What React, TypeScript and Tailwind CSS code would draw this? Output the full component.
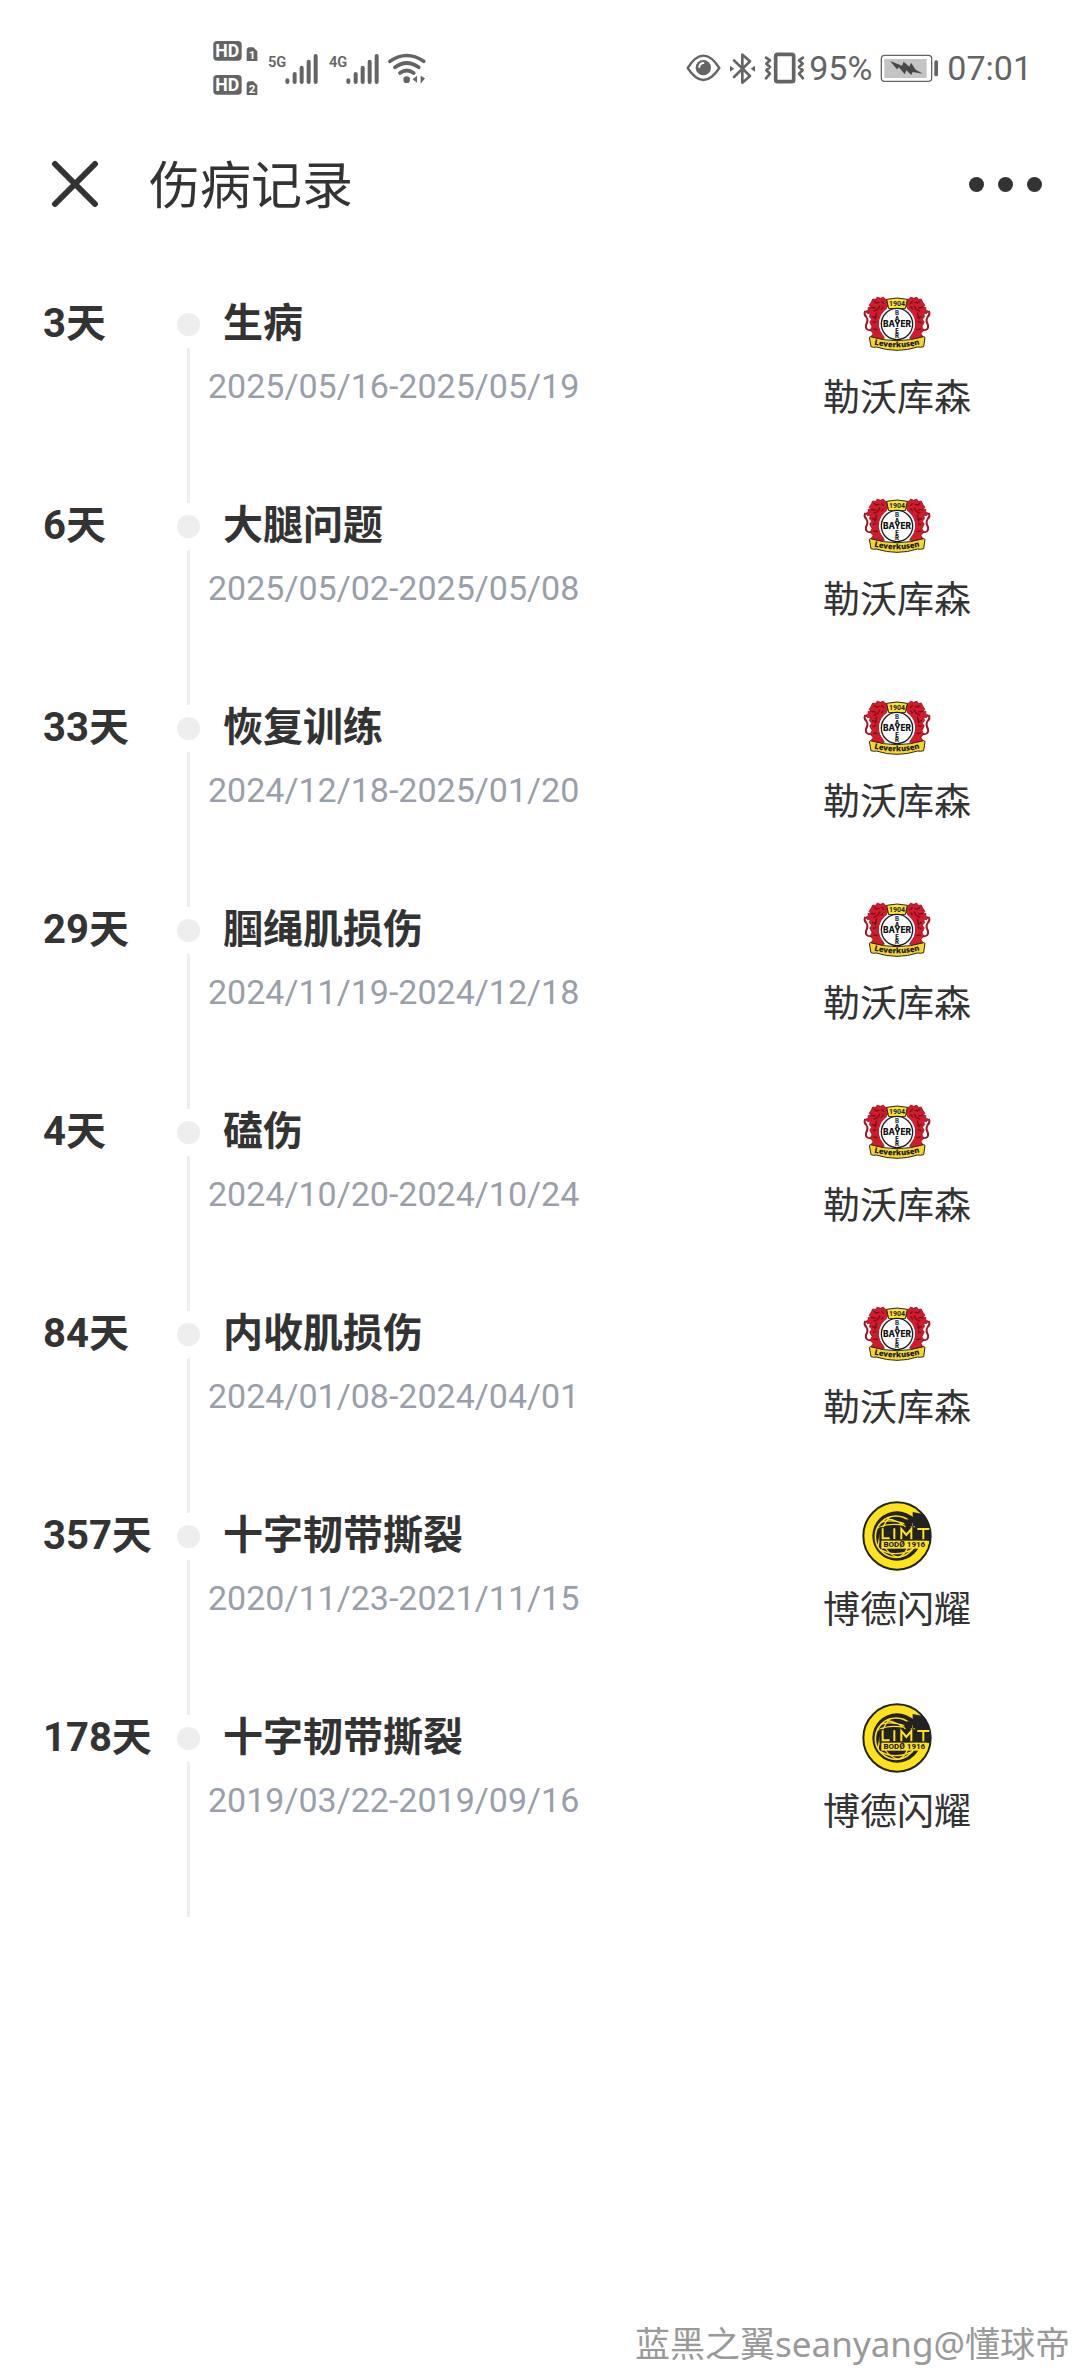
import React from "react";

type Club = "leverkusen" | "bodo";

interface Injury {
  days: number;
  title: string;
  period: string;
  club: Club;
}

const clubNames: Record<Club, string> = {
  leverkusen: "勒沃库森",
  bodo: "博德闪耀",
};

const injuries: Injury[] = [
  { days: 3, title: "生病", period: "2025/05/16-2025/05/19", club: "leverkusen" },
  { days: 6, title: "大腿问题", period: "2025/05/02-2025/05/08", club: "leverkusen" },
  { days: 33, title: "恢复训练", period: "2024/12/18-2025/01/20", club: "leverkusen" },
  { days: 29, title: "腘绳肌损伤", period: "2024/11/19-2024/12/18", club: "leverkusen" },
  { days: 4, title: "磕伤", period: "2024/10/20-2024/10/24", club: "leverkusen" },
  { days: 84, title: "内收肌损伤", period: "2024/01/08-2024/04/01", club: "leverkusen" },
  { days: 357, title: "十字韧带撕裂", period: "2020/11/23-2021/11/15", club: "bodo" },
  { days: 178, title: "十字韧带撕裂", period: "2019/03/22-2019/09/16", club: "bodo" },
];

const GREY = "#646464";

function HdBadges() {
  return (
    <svg viewBox="40 33 135 168" className="h-14 w-[45px]" aria-hidden="true">
      {[0, 102].map((dy, i) => (
        <g key={dy} transform={`translate(0 ${dy})`}>
          <rect x="41" y="36" width="85" height="59" rx="11" fill={GREY} />
          <text x="83" y="84" textAnchor="middle" fontFamily="Roboto" fontWeight="700" fontSize="53" fill="#fff">
            HD
          </text>
          <path d="M141 66q0-11 8-11h12l12 12v29h-32z" fill={GREY} />
          <text x="157" y="91" textAnchor="middle" fontFamily="Roboto" fontWeight="700" fontSize="35" fill="#fff">
            {i + 1}
          </text>
        </g>
      ))}
    </svg>
  );
}

function Signal({ label }: { label: string }) {
  return (
    <svg viewBox="205 63 153 99" className="h-[33px] w-[51px]" aria-hidden="true">
      <text x="205" y="108" fontFamily="Roboto" fontWeight="600" fontSize="44" fill={GREY}>
        {label}
      </text>
      <g stroke={GREY} strokeWidth="12" strokeLinecap="round">
        <path d="M263 148v5M285 129v24M306 110v43M327 92v61M348 75v78" />
      </g>
    </svg>
  );
}

function Wifi() {
  return (
    <svg viewBox="564 66 114 96" className="h-8 w-[38px]" fill="none" stroke={GREY} strokeWidth="11" strokeLinecap="round" aria-hidden="true">
      <path d="M570 94q50-35 101 0M585 112q35-26 71 0M600 129q20-15 41 0" />
      <circle cx="620" cy="149" r="10" fill={GREY} stroke="none" />
      <path d="M651 137v21l-13-10zM662 137v24l13-16z" fill={GREY} stroke="none" />
    </svg>
  );
}

function Eye() {
  return (
    <svg viewBox="48 72 105 84" className="h-7 w-[35px]" fill="none" aria-hidden="true">
      <path d="M53 114q47-74 95 0q-48 72-95 0z" stroke={GREY} strokeWidth="7" strokeLinejoin="round" />
      <circle cx="100" cy="113" r="23" fill={GREY} />
      <path d="M88 111q1-11 12-12" stroke="#fff" strokeWidth="6" strokeLinecap="round" />
    </svg>
  );
}

function Bluetooth() {
  return (
    <svg viewBox="177 64 81 99" className="h-[33px] w-[27px]" fill="none" aria-hidden="true">
      <path d="M192 89l48 47-23 20V72l23 20-48 47" stroke={GREY} strokeWidth="8" strokeLinejoin="round" strokeLinecap="round" />
      <path d="M180 105l13 9-13 9zM255 105l-13 9 13 9z" fill={GREY} />
    </svg>
  );
}

function Vibrate() {
  return (
    <svg viewBox="282 66 123 96" className="h-8 w-[41px]" fill="none" stroke={GREY} aria-hidden="true">
      <rect x="317" y="73" width="54" height="82" rx="6" strokeWidth="11" />
      <path d="M288 83l12 8-11 10 11 10-11 10 11 10-12 14M399 83l-12 8 11 10-11 10 11 10-11 10 12 14" strokeWidth="8" strokeLinejoin="round" strokeLinecap="round" />
    </svg>
  );
}

function Battery() {
  return (
    <svg viewBox="634 72 177 87" className="h-[29px] w-[59px]" fill="none" aria-hidden="true">
      <rect x="638" y="76" width="151" height="78" rx="10" stroke={GREY} strokeWidth="4" />
      <rect x="647" y="87" width="127" height="57" fill="#c4c4c4" />
      <path d="M664 93l36 14 5-12 17 15 5-12 14 21 22 12-31-5-4 9-15-14-5 12-17-21-6 6z" fill="#484848" />
      <rect x="797" y="91" width="11" height="48" rx="5" fill={GREY} />
    </svg>
  );
}

function StatusBar() {
  return (
    <div className="flex h-[136px] items-center justify-between pr-12 pl-[213px] text-[#646464]">
      <div className="flex items-center">
        <HdBadges />
        <div className="ml-2.5 flex items-center gap-2.5">
          <Signal label="5G" />
          <Signal label="4G" />
        </div>
        <div className="ml-2">
          <Wifi />
        </div>
      </div>
      <div className="flex items-center text-[34px] leading-10">
        <div className="flex items-center gap-2">
          <Eye />
          <Bluetooth />
          <Vibrate />
        </div>
        <span className="ml-1">95%</span>
        <span className="mr-2 ml-2">
          <Battery />
        </span>
        <time>07:01</time>
      </div>
    </div>
  );
}

function Header() {
  return (
    <header className="flex h-24 items-center pr-[38px] pl-[51px] text-[#333]">
      <button type="button" aria-label="关闭" className="cursor-pointer">
        <svg viewBox="0 0 48 48" className="size-12" stroke="currentColor" strokeWidth="6" strokeLinecap="round" aria-hidden="true">
          <path d="M4 4l40 40M44 4L4 44" />
        </svg>
      </button>
      <h1 className="ml-[50px] pt-1.5 text-[51px] leading-[60px]">伤病记录</h1>
      <button type="button" aria-label="更多" className="ml-auto flex cursor-pointer gap-3.5">
        <span className="size-[15px] rounded-full bg-[#333]" />
        <span className="size-[15px] rounded-full bg-[#333]" />
        <span className="size-[15px] rounded-full bg-[#333]" />
      </button>
    </header>
  );
}

/* One rampant lion; mirrored for the right-hand side of the crest. */
function Lion() {
  return (
    <g>
      <path d="M62 137q-19 1-16-16 8-15 1-24-8-8-4-16" fill="none" stroke="#a31420" strokeWidth="6" strokeLinecap="round" />
      <path
        d="M62 52l4-9 9 1 5-7 9 4 9-4 5 6 9 3-3 9 5 8-6 6-2 12-12 9-8 14-2 17 4 17 9 12 4 11-10 6H63l-5-7 9-13-8-12 5-9-7-14 6-8-7-8 3-10-9 1-5-7 8-5-1-7 9 1-6-7z"
        fill="#d01c2c"
        stroke="#7a0d18"
        strokeWidth="2"
      />
      <path d="M70 50l8 6 8-4M61 68l14 2M69 80l11-5M64 96l14 3M66 114l11-4M68 133l13 2M92 50l8 7M88 63l-7 12M78 84l-5 20M98 66l-6 8" fill="none" stroke="#7a0d18" strokeWidth="4" />
    </g>
  );
}

function LeverkusenCrest() {
  return (
    <svg viewBox="34 13 210 210" className="size-[70px]" role="img" aria-label="Bayer 04 Leverkusen">
      <Lion />
      <g transform="translate(278 0) scale(-1 1)">
        <Lion />
      </g>
      <circle cx="139" cy="117" r="54" fill="#fff" />
      <path d="M108 44q31-8 62 0l-6 28h-50z" fill="#f7e23c" stroke="#2a2510" strokeWidth="3" />
      <text x="139" y="65" textAnchor="middle" fontFamily="Roboto" fontWeight="700" fontSize="21" fill="#1a1a1a">
        1904
      </text>
      <circle cx="139" cy="118" r="47" fill="#fff" stroke="#1a1a1a" strokeWidth="4" />
      <g fontFamily="Inter" fontWeight="800" fill="#111" textAnchor="middle">
        <text x="139" y="127" fontSize="25">BAYER</text>
        <g fontSize="18">
          <text x="139" y="91" fill="#20405f">B</text>
          <text x="139" y="108">A</text>
          <text x="139" y="144">E</text>
          <text x="139" y="160">R</text>
        </g>
      </g>
      <path d="M59 156q80 24 160 0l4 2-4 28q-10 3-18 1-62 20-124 0-8 2-16-1l-5-28z" fill="#f4d62c" stroke="#2a2510" strokeWidth="3" />
      <path id="crest-ribbon" d="M62 177q77 22 154 0" fill="none" />
      <text fontFamily="Open Sans" fontWeight="800" fontSize="23" fill="#1a1a1a" textAnchor="middle">
        <textPath href="#crest-ribbon" startOffset="50%">Leverkusen</textPath>
      </text>
    </svg>
  );
}

function BodoCrest() {
  return (
    <svg viewBox="4 3 210 210" className="size-[70px]" role="img" aria-label="Bodø/Glimt">
      <circle cx="109" cy="108" r="101" fill="#ffe21a" stroke="#222" strokeWidth="6" />
      <circle cx="109" cy="108" r="74" fill="#222" />
      <path d="M186 42A99 99 0 0 1 208 122H150V72z" fill="#222" />
      <circle cx="106" cy="110" r="62" fill="#222" stroke="#ffe21a" strokeWidth="5" />
      <g fill="none" stroke="#ffe21a" strokeWidth="4">
        <path d="M62 66q44-12 92 16M78 56q34 4 58 26M88 50q-28 28-36 90M52 84q30-16 80-8M58 148q44 26 98 0M74 144q14 22 40 28M140 144q-6 18-26 28" />
      </g>
      <path d="M156 36l30 6 14 26-44 12z" fill="#222" />
      <circle cx="143" cy="70" r="12" fill="#222" />
      <path d="M56 82h152v40H56z" fill="#222" />
      <path d="M66 85v30h21M101 85v32M122 118V87l15 18 15-18v31M170 87h36M188 87v31" fill="none" stroke="#ffe21a" strokeWidth="6" />
      <rect x="62" y="122" width="138" height="24" fill="#ffe21a" />
      <text x="131" y="142" textAnchor="middle" fontFamily="Roboto" fontWeight="800" fontSize="24" fill="#222">
        BODØ 1916
      </text>
    </svg>
  );
}

function InjuryRow({ injury, first, last }: { injury: Injury; first: boolean; last: boolean }) {
  return (
    <li className={`flex ${last ? "min-h-[214px]" : "min-h-[202px]"}`}>
      <div className="w-44 shrink-0 pt-[11px] pl-[43px] text-[40px] leading-[48px] font-bold whitespace-nowrap">
        {injury.days}天
      </div>
      <div className="flex w-6 shrink-0 flex-col items-center gap-3" aria-hidden="true">
        <span className={`h-3 w-[3px] ${first ? "" : "bg-[#eee]"}`} />
        <span className="size-[23px] rounded-full bg-[#eee]" />
        <span className="w-[3px] flex-1 bg-[#eee]" />
      </div>
      <div className="flex-1 pt-[11px] pl-2">
        <h2 className="pl-[15px] text-[40px] leading-[48px] font-bold">{injury.title}</h2>
        <p className="mt-[18px] text-[34px] leading-10 text-[#999faa]">{injury.period}</p>
      </div>
      <div className="flex w-[366px] shrink-0 flex-col items-center">
        {injury.club === "leverkusen" ? <LeverkusenCrest /> : <BodoCrest />}
        <p className="mt-4 text-[37px] leading-[48px]">{clubNames[injury.club]}</p>
      </div>
    </li>
  );
}

export default function App() {
  return (
    <div className="flex min-h-screen flex-col bg-white font-[Roboto,'Noto_Sans_CJK_SC',sans-serif] text-[#333]">
      <StatusBar />
      <Header />
      <main className="pt-[57px]">
        <ul>
          {injuries.map((injury, i) => (
            <InjuryRow key={injury.period} injury={injury} first={i === 0} last={i === injuries.length - 1} />
          ))}
        </ul>
      </main>
      <footer className="mt-auto pr-[10px] pb-2 text-right font-['Noto_Sans','Noto_Sans_CJK_SC',sans-serif] text-[35px] leading-[48px] text-[#999]">
        蓝黑之翼seanyang@懂球帝
      </footer>
    </div>
  );
}
